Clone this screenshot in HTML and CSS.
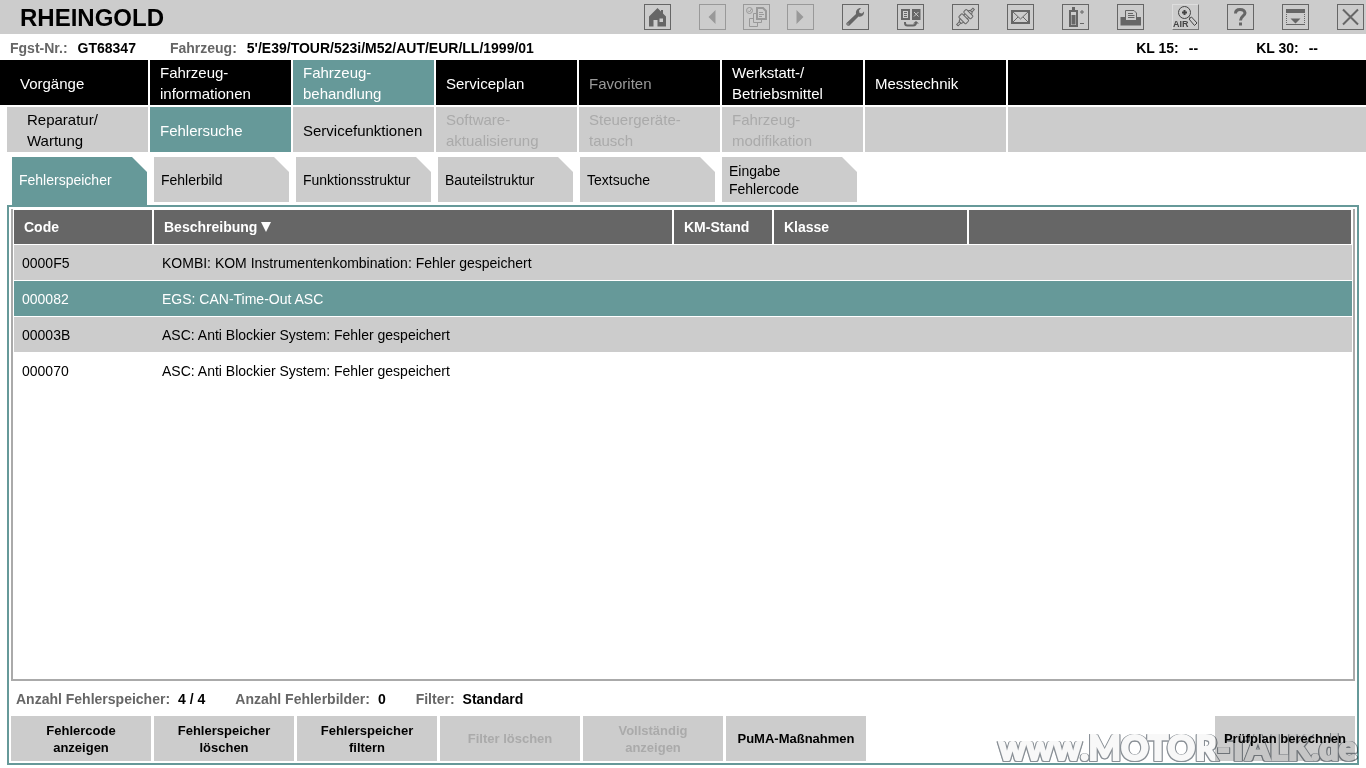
FILE: index.html
```html
<!DOCTYPE html>
<html lang="de">
<head>
<meta charset="utf-8">
<title>RHEINGOLD</title>
<link rel="stylesheet" href="styles.css">
</head>
<body>
<header class="titlebar">
  <h1 class="brand">RHEINGOLD</h1>
  <div class="tools">
    <button class="tool" aria-label="Startseite"><svg viewBox="1 1 25 24"><path class="fill" fill-rule="evenodd" d="M13.5 4 17 7.500V6h2v3.500L22 12.500V22.500H13.500V16H9.500V22.500H5V12.500ZM15.500 14.500V18H19V14.500Z"/></svg></button>
    <div class="history">
      <button class="tool" aria-label="Zurück" disabled><svg viewBox="1 1 25 24"><path class="fill" d="M9.500 13 16.500 6V20Z"/></svg></button>
      <button class="tool" aria-label="Verlauf" disabled><svg viewBox="1 1 25 24"><circle class="line" cx="6.500" cy="6.500" r="3"/><path class="line" d="M5 6.500 6.500 8 8.500 5"/><path class="line thick" d="M14 4H20L23 7V15H14Z"/><path class="line" d="M16 8.500H20M16 10.500H21M16 12.500H19M13 9.500H10.500V18.500H18.500V16M10.500 14.500H6.500V22.500H14.500V19"/></svg></button>
      <button class="tool" aria-label="Vor" disabled><svg viewBox="1 1 25 24"><path class="fill" d="M16.500 13 9.500 6V20Z"/></svg></button>
    </div>
    <button class="tool" aria-label="Einstellungen"><svg viewBox="1 1 25 24"><path class="fill" fill-rule="evenodd" d="M4.500 19 14 10C13.500 6.500 15.500 4 19 4L17 6.500 17.500 9 20 9.500 22 7.500C22.500 11 19.500 13.500 16.500 12.500L7.500 21.500C5.500 22.500 3.500 20.500 4.500 19ZM5.500 19.500V20.500H6.500V19.500Z"/></svg></button>
    <button class="tool" aria-label="Fahrzeugwechsel"><svg viewBox="1 1 25 24"><path class="fill" fill-rule="evenodd" d="M4 5H13V16H4ZM6 7V14H11V7ZM15 5H23.500V16H15Z"/><path class="line" d="M7 8.500H10M7 10.500H10M7 12.500H10"/><path class="cut" d="M17 8 21.500 12.500M21.500 8 17 12.500"/><path class="line thick" d="M8 18V19Q8 21.500 10.500 21.500H16Q19 21.500 19 18.500"/><path class="fill" d="M16 19.500 19 17 22 19.500Z"/></svg></button>
    <button class="tool" aria-label="Verbindung"><svg viewBox="1 1 25 24"><g class="line" transform="rotate(45 13.500 13)"><rect x="8.500" y="7" width="10" height="4" rx="1"/><rect x="8.500" y="13" width="10" height="5" rx="1"/><path d="M11 11V13M16 11V13M11 18 12 20.500H15L16 18M11 7 12 5H15L16 7M12.500 5V1.500H14.500V5M12.500 20.500V24.500H14.500V20.500"/></g></svg></button>
    <button class="tool" aria-label="Nachrichten"><svg viewBox="1 1 25 24"><path class="line wide" d="M5 7H22V19H5Z"/><path class="line" d="M5 7 13.500 15 22 7M5 19 11 13M22 19 16 13"/></svg></button>
    <button class="tool" aria-label="Batterie"><svg viewBox="1 1 25 24"><path class="line thick" d="M8 7H15V22H8Z"/><path class="fill" d="M10 3H13V6H10ZM9.500 11H13.500V20.500H9.500Z"/><path class="line" d="M18 8H22M20 6V10M18 19.500H22"/></svg></button>
    <button class="tool" aria-label="Drucken"><svg viewBox="1 1 25 24"><path class="fill" d="M3.500 13H8V16H20V13H24V21.500H3.500Z"/><path class="line" d="M8.500 16V6.500H17L19.500 9V16M11 9.500H16M11 11.500H17.500M11 13.500H17.500"/></svg></button>
    <button class="tool air" aria-label="AIR"><svg viewBox="1 1 25 24"><circle class="line dark" cx="12.500" cy="8.500" r="6"/><path class="line dark thick" d="M10 8.500H15M12.500 6V11"/><path class="line dark" d="M17 15 19.500 13 25 19 22.500 21.500ZM17 12.500 18.500 14"/><text class="air-label" x="1" y="23">AIR</text></svg></button>
    <button class="tool" aria-label="Hilfe"><svg viewBox="1 1 25 24"><path class="line heavy" d="M8.500 9.500Q8.500 5.500 13 5.500T18 9C18 12 13.500 12 13.500 16.500"/><path class="fill" d="M12 18.500H15V21.500H12Z"/></svg></button>
    <button class="tool" aria-label="Fenster minimieren"><svg viewBox="1 1 25 24"><path class="fill" d="M4 5H23V9H4ZM8.500 14.500H18.500L13.500 19.500Z"/><path class="line" d="M4 20.500H23"/><path class="line dots" d="M4.500 10V19M22.500 10V19"/></svg></button>
    <button class="tool" aria-label="Schließen"><svg viewBox="1 1 25 24"><path class="line wide" d="M6 5.500 21 20.500M21 5.500 6 20.500"/></svg></button>
  </div>
</header>

<div class="vehicle">
  <dl class="facts">
    <div><dt>Fgst-Nr.:</dt><dd>GT68347</dd></div>
    <div><dt>Fahrzeug:</dt><dd>5'/E39/TOUR/523i/M52/AUT/EUR/LL/1999/01</dd></div>
  </dl>
  <dl class="terminals">
    <div><dt>KL 15:</dt><dd>--</dd></div>
    <div><dt>KL 30:</dt><dd>--</dd></div>
  </dl>
</div>

<nav class="menu main-menu">
  <button>Vorgänge</button>
  <button>Fahrzeug-<br>informationen</button>
  <button class="active">Fahrzeug-<br>behandlung</button>
  <button>Serviceplan</button>
  <button disabled>Favoriten</button>
  <button>Werkstatt-/<br>Betriebsmittel</button>
  <button>Messtechnik</button>
  <span></span>
</nav>
<nav class="menu sub-menu">
  <button>Reparatur/<br>Wartung</button>
  <button class="active">Fehlersuche</button>
  <button>Servicefunktionen</button>
  <button disabled>Software-<br>aktualisierung</button>
  <button disabled>Steuergeräte-<br>tausch</button>
  <button disabled>Fahrzeug-<br>modifikation</button>
  <span></span>
  <span></span>
</nav>
<nav class="tabs">
  <button class="active">Fehlerspeicher</button>
  <button>Fehlerbild</button>
  <button>Funktionsstruktur</button>
  <button>Bauteilstruktur</button>
  <button>Textsuche</button>
  <button>Eingabe<br>Fehlercode</button>
</nav>

<main class="panel">
  <div class="list">
    <table class="codes">
      <colgroup><col class="c-code"><col class="c-text"><col class="c-km"><col class="c-class"><col></colgroup>
      <thead>
        <tr><th>Code</th><th>Beschreibung <svg class="sort" viewBox="0 0 10 10"><path d="M0 0H10L5 10Z"/></svg></th><th>KM-Stand</th><th>Klasse</th><th></th></tr>
      </thead>
      <tbody>
        <tr class="odd"><td>0000F5</td><td>KOMBI: KOM Instrumentenkombination: Fehler gespeichert</td><td></td><td></td><td></td></tr>
        <tr class="selected"><td>000082</td><td>EGS: CAN-Time-Out ASC</td><td></td><td></td><td></td></tr>
        <tr class="odd"><td>00003B</td><td>ASC: Anti Blockier System: Fehler gespeichert</td><td></td><td></td><td></td></tr>
        <tr><td>000070</td><td>ASC: Anti Blockier System: Fehler gespeichert</td><td></td><td></td><td></td></tr>
      </tbody>
    </table>
  </div>
  <dl class="summary">
    <div><dt>Anzahl Fehlerspeicher:</dt><dd>4 / 4</dd></div>
    <div><dt>Anzahl Fehlerbilder:</dt><dd>0</dd></div>
    <div><dt>Filter:</dt><dd>Standard</dd></div>
  </dl>
  <div class="actions">
    <button>Fehlercode<br>anzeigen</button>
    <button>Fehlerspeicher<br>löschen</button>
    <button>Fehlerspeicher<br>filtern</button>
    <button disabled>Filter löschen</button>
    <button disabled>Vollständig<br>anzeigen</button>
    <button>PuMA-Maßnahmen</button>
    <button class="plan">Prüfplan berechnen</button>
  </div>
</main>
<div class="watermark">www.MOTOR-TALK.de</div>
</body>
</html>
```

FILE: styles.css
```css
* { box-sizing: border-box; }

body {
  margin: 0;
  min-height: 100vh;
  display: flex;
  flex-direction: column;
  position: relative;
  background: #fff;
  color: #000;
  font: 14px/18px "Liberation Sans", Arial, sans-serif;
}

button {
  margin: 0;
  border: 0;
  padding: 0;
  font: inherit;
  color: inherit;
  background: #ccc;
}

dl, dd, h1 { margin: 0; }

.titlebar {
  display: flex;
  justify-content: space-between;
  height: 34px;
  padding: 4px 2px 4px 20px;
  background: #ccc;
}

.brand { font-size: 24px; line-height: 28px; font-weight: bold; }

.tools { display: flex; gap: 28px; }
.history { display: flex; gap: 17px; }

.tool {
  width: 27px;
  height: 26px;
  border: 1px solid #666;
  color: #666;
}
.tool:disabled { border-color: #999; color: #999; }
.tool svg { display: block; width: 100%; height: 100%; }
.tool.air { border-color: #ddd #777 #777 #ddd; }

.fill { fill: currentColor; }
.line { fill: none; stroke: currentColor; stroke-width: 1; }
.thick { stroke-width: 2; }
.wide { stroke-width: 2; }
.heavy { stroke-width: 3; }
.dots { stroke-dasharray: 1 1; }
.dark { color: #444; }
.cut { fill: none; stroke: #ccc; stroke-width: 1; }
.air-label { font: bold 9px "Liberation Sans", Arial, sans-serif; fill: #444; }

.vehicle {
  display: flex;
  justify-content: space-between;
  height: 26px;
  padding: 5px 48px 0 10px;
  font-weight: bold;
}
.facts, .terminals, .summary { display: flex; }
.facts { gap: 34px; }
.terminals { gap: 58px; }
.facts div, .terminals div { display: flex; gap: 10px; }
.facts dt, .summary dt { color: #666; }

.menu {
  display: grid;
  grid-template-columns: 148px repeat(6, 141px) 1fr;
  gap: 2px;
  min-height: 45px;
  margin-bottom: 2px;
  font-size: 15px;
  line-height: 21px;
}
.menu button { padding: 1px 10px 0; text-align: left; white-space: nowrap; }
.menu button:first-child { padding-left: 20px; }
.menu span { background: #ccc; }
.main-menu button, .main-menu span { background: #000; color: #fff; }
.main-menu button:disabled { color: #999; }
.sub-menu { grid-template-columns: 141px repeat(6, 141px) 1fr; margin-left: 7px; }
.sub-menu button:disabled { color: #aaa; }
.menu .active { background: #699; color: #fff; }

.tabs {
  display: flex;
  gap: 7px;
  height: 51px;
  padding: 3px 12px 0;
}
.tabs button {
  width: 135px;
  height: 45px;
  padding: 1px 7px 0;
  text-align: left;
  clip-path: polygon(0 0, calc(100% - 15px) 0, 100% 15px, 100% 100%, 0 100%);
}
.tabs .active { height: 48px; padding-bottom: 3px; background: #699; color: #fff; }

.panel {
  flex: 1;
  display: flex;
  flex-direction: column;
  margin: 0 7px 3px;
  padding: 2px;
  border: 2px solid #699;
}

.list {
  flex: 1;
  padding: 0 1px;
  border: 2px solid #aaa;
  border-top: 0;
}

.codes {
  width: 100%;
  table-layout: fixed;
  border-spacing: 0;
}
.c-code { width: 140px; }
.c-text { width: 520px; }
.c-km { width: 100px; }
.c-class { width: 195px; }
.codes th {
  height: 36px;
  padding: 0 10px;
  border: solid #fff;
  border-width: 1px 2px 1px 0;
  background: #666;
  color: #fff;
  text-align: left;
}
.codes th:last-child { border-right-width: 1px; }
.codes td {
  height: 36px;
  padding: 1px 8px 0;
  border-bottom: 1px solid #fff;
  white-space: nowrap;
}
.codes .odd { background: #ccc; }
.codes .selected { background: #699; color: #fff; }
.sort { width: 10px; height: 10px; fill: #fff; }

.summary { gap: 30px; padding: 9px 5px 8px; font-weight: bold; }
.summary div { display: flex; gap: 8px; }

.actions { display: flex; gap: 3px; }
.actions button {
  width: 140px;
  height: 45px;
  font-size: 13px;
  font-weight: bold;
  line-height: 17px;
  white-space: nowrap;
}
.actions button:disabled { color: #aaa; }
.actions .plan { margin-left: auto; }

.watermark {
  position: absolute;
  right: 9px;
  bottom: 1px;
  font: 900 34px/40px Lato, "Liberation Sans", sans-serif;
  color: #f8f8f8;
  -webkit-text-stroke: 2px #f8f8f8;
  filter: drop-shadow(1px 0 0 #8a9096) drop-shadow(-1px 0 0 #8a9096) drop-shadow(0 1px 0 #8a9096);
  mix-blend-mode: multiply;
  pointer-events: none;
}
```
